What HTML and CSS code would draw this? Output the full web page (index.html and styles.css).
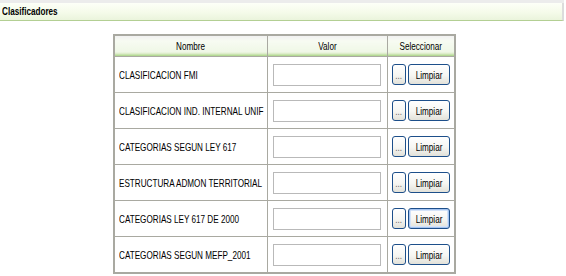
FILE: index.html
```html
<!DOCTYPE html>
<html lang="es">
<head>
    <meta charset="UTF-8">
    <title>Clasificadores</title>
    <link rel="stylesheet" href="styles.css">
</head>
<body>

    <div class="titulo"><span class="txt">Clasificadores</span></div>

    <table class="grilla">
        <colgroup>
            <col class="col-nombre">
            <col class="col-valor">
            <col class="col-sel">
        </colgroup>
        <tr>
            <th><span class="txt">Nombre</span></th>
            <th><span class="txt">Valor</span></th>
            <th><span class="txt">Seleccionar</span></th>
        </tr>
        <tr>
            <td><span class="txt">CLASIFICACION FMI</span></td>
            <td class="centro"><input type="text" class="campo"></td>
            <td class="centro"><button class="btn btn-sel"><span class="txt">...</span></button><button class="btn"><span class="txt">Limpiar</span></button></td>
        </tr>
        <tr>
            <td><span class="txt">CLASIFICACION IND. INTERNAL UNIF</span></td>
            <td class="centro"><input type="text" class="campo"></td>
            <td class="centro"><button class="btn btn-sel"><span class="txt">...</span></button><button class="btn"><span class="txt">Limpiar</span></button></td>
        </tr>
        <tr>
            <td><span class="txt">CATEGORIAS SEGUN LEY 617</span></td>
            <td class="centro"><input type="text" class="campo"></td>
            <td class="centro"><button class="btn btn-sel"><span class="txt">...</span></button><button class="btn"><span class="txt">Limpiar</span></button></td>
        </tr>
        <tr>
            <td><span class="txt">ESTRUCTURA ADMON TERRITORIAL</span></td>
            <td class="centro"><input type="text" class="campo"></td>
            <td class="centro"><button class="btn btn-sel"><span class="txt">...</span></button><button class="btn"><span class="txt">Limpiar</span></button></td>
        </tr>
        <tr>
            <td><span class="txt">CATEGORIAS LEY 617 DE 2000</span></td>
            <td class="centro"><input type="text" class="campo"></td>
            <td class="centro"><button class="btn btn-sel"><span class="txt">...</span></button><button class="btn activo"><span class="txt">Limpiar</span></button></td>
        </tr>
        <tr>
            <td><span class="txt">CATEGORIAS SEGUN MEFP_2001</span></td>
            <td class="centro"><input type="text" class="campo"></td>
            <td class="centro"><button class="btn btn-sel"><span class="txt">...</span></button><button class="btn"><span class="txt">Limpiar</span></button></td>
        </tr>
    </table>

</body>
</html>
```

FILE: styles.css
```css
body {
    margin: 0;
    padding-top: 3px;
    font-family: "Liberation Sans", Arial, sans-serif;
    font-size: 11px;
    color: #000;
    background-color: #fff;
}

/* texto angosto, como la fuente condensada del original */
.txt {
    display: inline-block;
    white-space: nowrap;
    transform: scaleX(0.74);
    transform-origin: left center;
}

.titulo {
    width: 560px;
    height: 17px;
    line-height: 17px;
    padding-left: 2px;
    font-weight: bold;
    background: linear-gradient(to bottom, #fdfff8 0%, #f5fbea 55%, #eaf4dc 100%);
    border-bottom: 1px solid #b3cf93;
    border-right: 2px solid #dcdcdc;
    box-shadow: 0 -3px 0 #ececec;
}

.grilla {
    margin: 13px 0 0 113px;
    width: 341px;
    table-layout: fixed;
    border-collapse: collapse;
    border: 2px solid #a9a9a1;
}

.col-nombre { width: 153px; }
.col-valor { width: 120px; }
.col-sel { width: 68px; }

.grilla th,
.grilla td {
    border: 1px solid #a9a9a1;
    padding: 0 0 0 4px;
    overflow: visible;
}

.grilla th {
    height: 20px;
    padding: 0;
    font-weight: normal;
    text-align: center;
    background: linear-gradient(to bottom, #f1f1f1 0%, #f7fbf2 25%, #eff7e6 80%, #dcecc8 88%, #a9d486 100%);
}

.grilla th .txt,
.centro .txt {
    transform-origin: center center;
}

.grilla td {
    height: 35px;
}

.grilla td.centro {
    padding: 0;
    text-align: center;
}

.campo {
    box-sizing: border-box;
    width: 108px;
    height: 22px;
    padding: 1px;
    margin: 0;
    border: 1px solid #b9b9b9;
    vertical-align: middle;
}

.btn {
    box-sizing: border-box;
    width: 42px;
    height: 21px;
    margin: 0 0 0 2px;
    padding: 0;
    font-family: "Liberation Sans", Arial, sans-serif;
    font-size: 11px;
    color: #000;
    background: linear-gradient(to bottom, #ffffff 0%, #f6f6f2 55%, #e2e1d9 100%);
    border: 1px solid #1d4f8a;
    border-radius: 3px;
    vertical-align: middle;
}

.btn-sel {
    width: 14px;
    margin: 0;
    color: #666;
}

.btn.activo {
    box-shadow: inset 0 0 0 1px #a4c3f0, inset 0 0 0 2px #d4e3f8;
}
```
